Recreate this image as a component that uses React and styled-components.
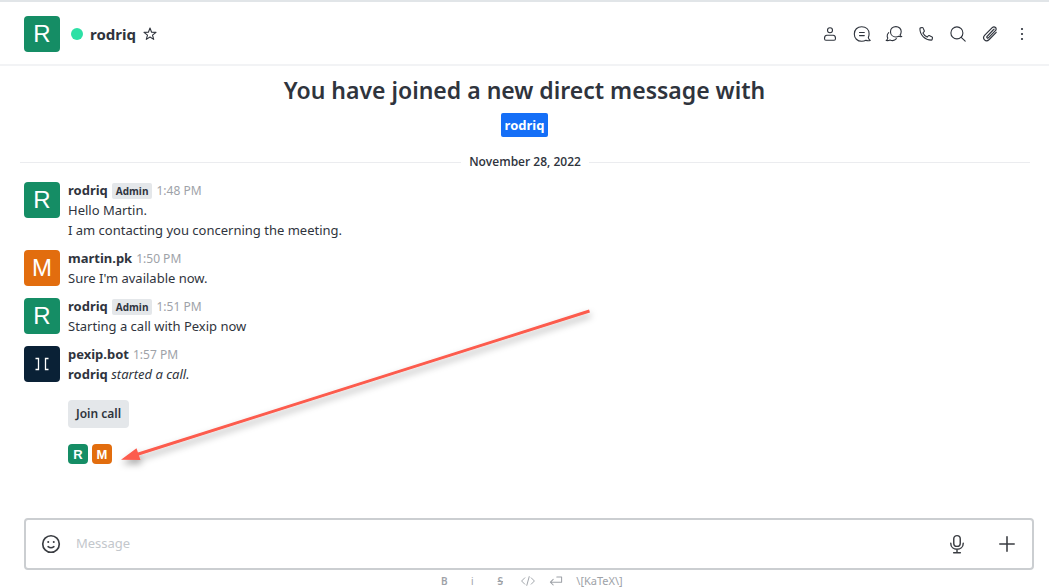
import React from 'react';
import styled, { createGlobalStyle } from 'styled-components';

const GlobalStyle = createGlobalStyle`
  *, *::before, *::after { box-sizing: border-box; }
  body {
    margin: 0;
    background: #fff;
    color: #2f343d;
    font-family: "Noto Sans", "Open Sans", sans-serif;
    font-size: 13px;
    line-height: 20px;
  }
  button, input { font: inherit; color: inherit; }
  strong { font-weight: 700; }
`;

const Room = styled.div`
  position: relative;
  display: flex;
  flex-direction: column;
  height: 100vh;
  overflow: hidden;
  border-top: 2px solid #e1e5e8;
`;

const Header = styled.header`
  flex: none;
  display: flex;
  align-items: center;
  height: 64px;
  padding: 2px 16px 0 24px;
  border-bottom: 2px solid #f2f3f5;
`;

const Presence = styled.span`
  width: 12px;
  height: 12px;
  margin: 0 7px 0 11px;
  border-radius: 50%;
  background: #2de0a5;
`;

const RoomName = styled.h1`
  margin: 0;
  font-size: 15px;
  font-weight: 700;
  line-height: 24px;
`;

const IconButton = styled.button`
  display: flex;
  align-items: center;
  justify-content: center;
  width: ${(p) => p.$size || 20}px;
  height: ${(p) => p.$size || 20}px;
  padding: 0;
  border: 0;
  background: none;
  cursor: pointer;
`;

const Favorite = styled(IconButton)`
  margin-left: 4px;
`;

const Actions = styled.nav`
  display: flex;
  gap: 12px;
  margin-left: auto;
  padding-right: 1px;
`;

const colors = { green: '#158d65', orange: '#e26d0e', navy: '#0a2136' };

const Avatar = styled.span`
  flex: none;
  display: flex;
  align-items: center;
  justify-content: center;
  width: ${(p) => (p.$small ? 20 : 36)}px;
  height: ${(p) => (p.$small ? 20 : 36)}px;
  border-radius: 4px;
  background: ${(p) => colors[p.$color]};
  color: #fff;
  font-family: "Liberation Sans", Arial, sans-serif;
  font-size: ${(p) => (p.$small ? 13 : 24)}px;
  font-weight: ${(p) => (p.$small ? 700 : 400)};
  line-height: 1;
`;

const Feed = styled.main`
  flex: 1;
  min-height: 0;
  padding-top: 8px;
  overflow: hidden;
`;

const Intro = styled.section`
  display: flex;
  flex-direction: column;
  align-items: center;
  gap: 7px;
`;

const IntroTitle = styled.h2`
  margin: 0;
  font-size: 23px;
  font-weight: 600;
  line-height: 32px;
`;

const UserTag = styled.a`
  padding: 2px 4px;
  border-radius: 2px;
  background: #156ff7;
  color: #fff;
  font-weight: 700;
  text-decoration: none;
`;

const DateDivider = styled.div`
  display: flex;
  align-items: center;
  gap: 8px;
  margin: 15px 19px 8px 20px;
  font-family: "Open Sans", "Noto Sans", sans-serif;
  font-size: 12px;
  font-weight: 600;

  &::before, &::after {
    content: "";
    flex: 1;
    height: 1px;
    background: #ebecef;
  }
`;

const Messages = styled.ol`
  margin: 0;
  padding: 0;
  list-style: none;
`;

const Item = styled.li`
  display: flex;
  gap: 8px;
  padding: 2px 24px 8px;
`;

const Body = styled.div`
  flex: 1;
  margin-top: -2px;
`;

const Meta = styled.div`
  display: flex;
  align-items: baseline;
  gap: 4px;
  height: 20px;
`;

const Role = styled.span`
  padding: 0 4px;
  border-radius: 2px;
  background: #e4e7ea;
  font-family: "Open Sans", "Noto Sans", sans-serif;
  font-size: 10px;
  font-weight: 700;
  line-height: 16px;
`;

const Time = styled.time`
  color: #9ea2a8;
  font-size: 12px;
`;

const Text = styled.p`
  margin: 0;
`;

const JoinButton = styled.button`
  display: block;
  height: 28px;
  margin: 16px 0;
  padding: 0 8px;
  border: 0;
  border-radius: 4px;
  background: #e4e7ea;
  font-size: 12px;
  font-weight: 600;
  cursor: pointer;
`;

const Participants = styled.div`
  display: flex;
  gap: 4px;
`;

const Composer = styled.form`
  flex: none;
  display: flex;
  align-items: center;
  height: 52px;
  margin: 0 15px 0 24px;
  padding: 0 13px;
  border: 2px solid #cbced1;
  border-radius: 4px;
  color: #3a3d42;
`;

const MessageInput = styled.input`
  flex: 1;
  min-width: 0;
  height: 24px;
  margin: 0 12px 0 13px;
  padding: 0 0 2px;
  border: 0;
  outline: 0;
  background: none;

  &::placeholder { color: #c3c7cc; opacity: 1; }
`;

const ComposerActions = styled.div`
  display: flex;
  gap: 26px;
`;

const Hints = styled.footer`
  flex: none;
  display: flex;
  justify-content: center;
  gap: 12px;
  height: 18px;
  padding: 4px 15px 0 25px;
  overflow: hidden;
  color: #9ea2a8;
`;

const HintButton = styled.button`
  display: flex;
  align-items: center;
  justify-content: center;
  min-width: 16px;
  height: 14px;
  padding: 0;
  border: 0;
  background: none;
  font-size: ${(p) => (p.$wide ? 11 : 10)}px;
  font-weight: ${(p) => (p.$bold ? 600 : 400)};
  line-height: 14px;
  white-space: nowrap;
`;

const Pointer = styled.svg`
  position: absolute;
  left: 110px;
  top: 298px;
  pointer-events: none;
`;

function Icon({ size = 20, weight = 1.1, children }) {
  return (
    <svg width={size} height={size} viewBox="0 0 20 20" fill="none" stroke="currentColor"
      strokeWidth={weight} strokeLinecap="round" strokeLinejoin="round" aria-hidden="true">
      {children}
    </svg>
  );
}

const headerActions = [
  ['User info', <><circle cx="10" cy="6.200" r="2.500" /><path d="M6.800 11.200h6.400q2.300 0 2.300 3.200 0 1.800-1.400 1.800H5.900q-1.400 0-1.400-1.800 0-3.200 2.300-3.200z" /></>],
  ['Threads', <><path d="M16.300 13.400c.6-1.100.8-2.200.8-3.600 0-4.200-3-7.100-7.400-7.100S2.300 5.700 2.300 10s3 7.300 7.400 7.300c1.800 0 3-.3 4.200-1 1.300.6 2.700.6 4.300.1-1-.7-1.800-1.600-1.900-3z" /><path d="M7.500 8.500h4.800M7.500 11.600h4.800" /></>],
  ['Discussions', <><path d="M16 11.100c.8-1 1.200-2.200 1.200-3.500 0-3-2.300-5-5.300-5S6.500 4.700 6.500 7.700s2.300 5.300 5.400 5.300c1.100 0 2-.2 2.800-.7 1 .5 2 .5 3.100.2-.9-.3-1.500-.7-1.800-1.400z" /><path d="M4.700 8.700c-1.200 1-1.700 2.200-1.500 3.700.1.600.3 1.100.6 1.600-.1 1.100-.7 1.900-1.600 2.500 1.400.3 2.700.1 3.800-.5 2.500 1 5 .4 6.400-1.300" /></>],
  ['Call', <path d="M4.600 3.900l1.500-.4c.4-.1.700.1.900.4l1.300 2.900c.1.300 0 .6-.2.900L6.900 9c1 1.900 2.300 3.200 4.200 4.100l1.200-1.300c.2-.3.600-.3.900-.2l2.900 1.300c.3.200.5.500.4.900l-.4 1.700c-.1.400-.4.600-.8.600-6.200-.1-11.300-4.900-11.400-11.400 0-.4.300-.7.700-.8z" />],
  ['Search', <><circle cx="8.900" cy="8.900" r="6" /><path d="M13.200 13.300l4 3.900" /></>],
  ['Files', <path strokeWidth="1.200" d="M12.700 6.500L7.100 12.300c-1 1.100.5 2.400 1.500 1.400l6.800-7c2.200-2.300-.9-5.300-3.200-3L4.800 11.200c-3.200 3.400 1 7.600 4.400 4.300l7-7.200M14.100 5.100l-6.700 7" />],
  ['More', <path d="M10 5h.01M10 10h.01M10 15h.01" strokeWidth="2.200" />],
];

const messages = [
  { user: 'rodriq', letter: 'R', color: 'green', admin: true, time: '1:48 PM', lines: ['Hello Martin.', 'I am contacting you concerning the meeting.'] },
  { user: 'martin.pk', letter: 'M', color: 'orange', time: '1:50 PM', lines: ["Sure I'm available now."] },
  { user: 'rodriq', letter: 'R', color: 'green', admin: true, time: '1:51 PM', lines: ['Starting a call with Pexip now'] },
];

const BotMark = () => (
  <svg width="36" height="36" viewBox="0 0 36 36" fill="none" stroke="#fff" strokeWidth="1.300" aria-hidden="true">
    <path d="M11.500 12.500h3v11h-3M24.500 12.500h-3v11h3" />
  </svg>
);

function Message({ user, avatar, color, admin, time, children }) {
  return (
    <Item>
      <Avatar $color={color}>{avatar}</Avatar>
      <Body>
        <Meta>
          <strong>{user}</strong>
          {admin && <Role>Admin</Role>}
          <Time>{time}</Time>
        </Meta>
        {children}
      </Body>
    </Item>
  );
}

export default function App() {
  return (
    <>
      <GlobalStyle />
      <Room>
        <Header>
          <Avatar $color="green">R</Avatar>
          <Presence />
          <RoomName>rodriq</RoomName>
          <Favorite aria-label="Favorite">
            <Icon><path d="M10 4l1.600 4.200 4.400.2-3.500 2.700 1.200 4.300L10 13l-3.700 2.400 1.200-4.300L4 8.400l4.400-.2z" /></Icon>
          </Favorite>
          <Actions>
            {headerActions.map(([label, shape]) => (
              <IconButton key={label} aria-label={label}><Icon>{shape}</Icon></IconButton>
            ))}
          </Actions>
        </Header>

        <Feed>
          <Intro>
            <IntroTitle>You have joined a new direct message with</IntroTitle>
            <UserTag href="#rodriq">rodriq</UserTag>
          </Intro>
          <DateDivider>November 28, 2022</DateDivider>
          <Messages>
            {messages.map((m) => (
              <Message key={m.time} {...m} avatar={m.letter}>
                {m.lines.map((line) => <Text key={line}>{line}</Text>)}
              </Message>
            ))}
            <Message user="pexip.bot" avatar={<BotMark />} color="navy" time="1:57 PM">
              <Text><strong>rodriq</strong> <em>started a call.</em></Text>
              <JoinButton>Join call</JoinButton>
              <Participants>
                <Avatar $small $color="green">R</Avatar>
                <Avatar $small $color="orange">M</Avatar>
              </Participants>
            </Message>
          </Messages>
        </Feed>

        <Composer>
          <IconButton type="button" $size={24} aria-label="Emoji">
            <Icon size={24} weight={1.400}>
              <circle cx="10" cy="10" r="6.900" />
              <path d="M7.700 8.300h.01M12.300 8.300h.01" strokeWidth="1.700" />
              <path d="M7.600 12.200c1.300 1 3.500 1 4.800 0" />
            </Icon>
          </IconButton>
          <MessageInput aria-label="Message" placeholder="Message" />
          <ComposerActions>
            <IconButton type="button" $size={24} aria-label="Record audio">
              <Icon size={24} weight={1.200}>
                <rect x="7.300" y="3" width="5.400" height="9" rx="2.700" />
                <path d="M4.800 9.300c0 6.800 10.400 6.800 10.400 0M10 14.500v2.700M7.200 17.300h5.600" />
              </Icon>
            </IconButton>
            <IconButton type="button" $size={24} aria-label="Add">
              <Icon size={24} weight={1.300}><path d="M10 4v12M4 10h12" /></Icon>
            </IconButton>
          </ComposerActions>
        </Composer>

        <Hints>
          <HintButton $bold>B</HintButton>
          <HintButton>i</HintButton>
          <HintButton $bold><s>S</s></HintButton>
          <HintButton aria-label="Code">
            <Icon size={16} weight={1.200}><path d="M6 6L2 10l4 4M14 6l4 4-4 4M11.500 4.500l-3 11" /></Icon>
          </HintButton>
          <HintButton aria-label="New line">
            <Icon size={16} weight={1.300}><path d="M11 5h6v6.500H3M6.500 8L3 11.500 6.500 15" /></Icon>
          </HintButton>
          <HintButton $wide>\[KaTeX\]</HintButton>
        </Hints>

        <Pointer width="500" height="180" viewBox="110 300 500 180" aria-hidden="true">
          <defs>
            <filter id="soft" x="-10%" y="-20%" width="120%" height="150%">
              <feDropShadow dx="1" dy="4" stdDeviation="3.500" floodColor="#000" floodOpacity="0.350" />
            </filter>
          </defs>
          <g filter="url(#soft)">
            <path d="M589.500 311L136 454.800" stroke="#fc5b4e" strokeWidth="3" />
            <path d="M121 459.700l15.500-11.500 4 11.800z" fill="#fc5b4e" />
          </g>
        </Pointer>
      </Room>
    </>
  );
}
